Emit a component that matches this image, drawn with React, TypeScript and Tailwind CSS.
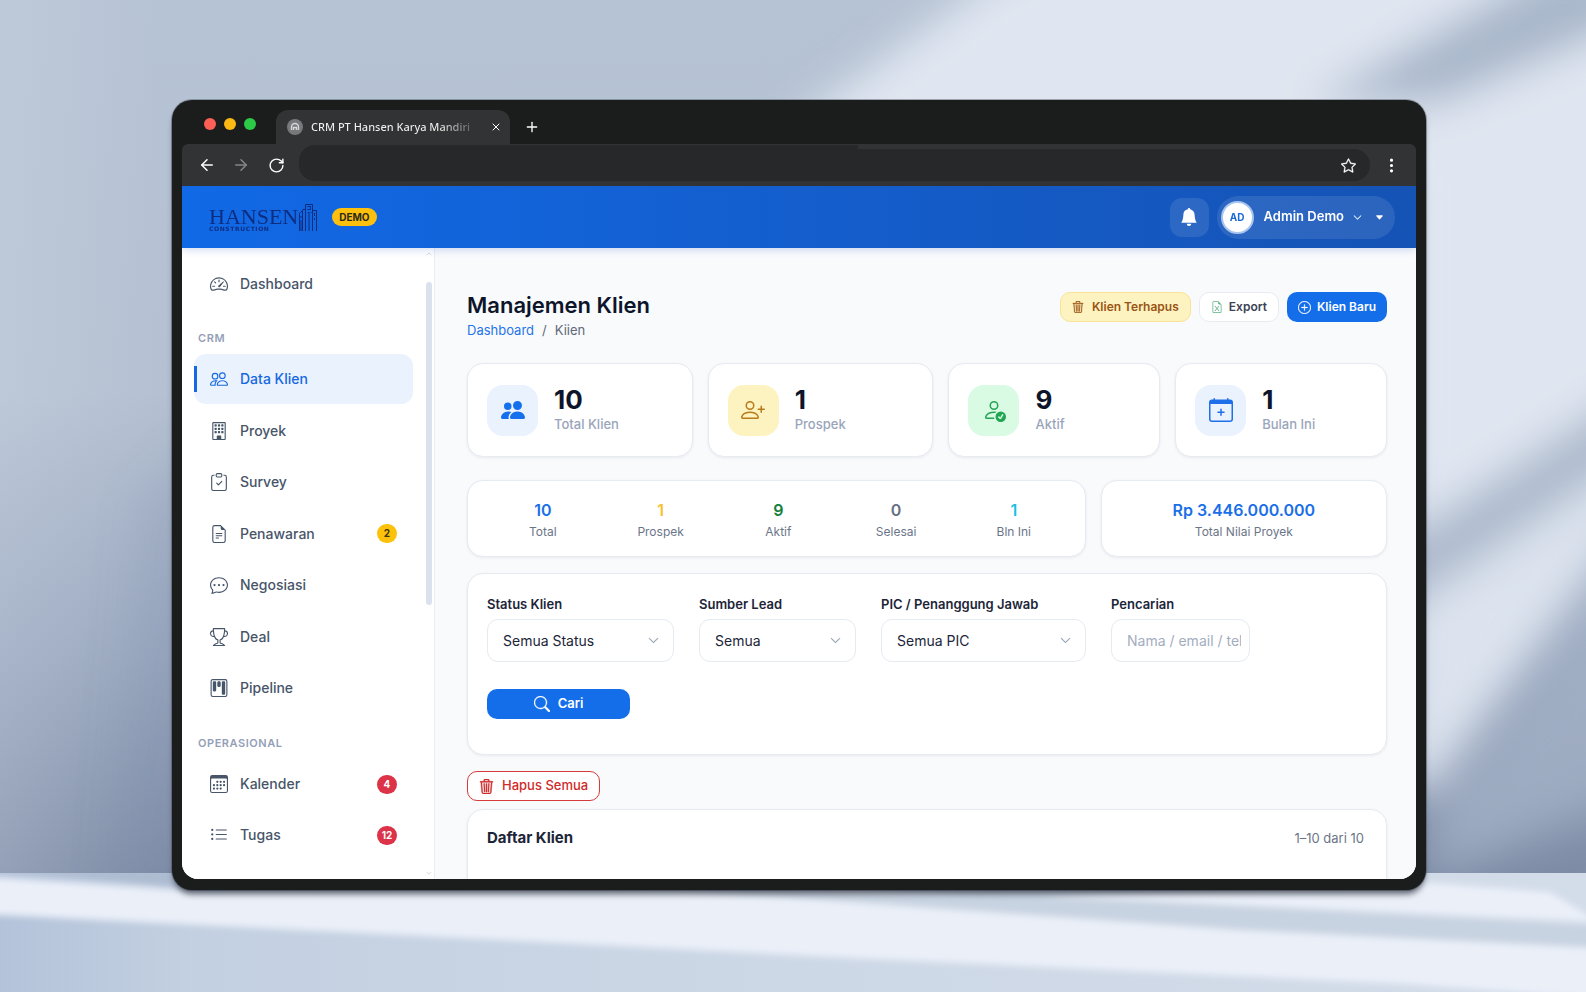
import type { ReactNode } from "react";
import type { IconType } from "react-icons";
import {
  BsBellFill,
  BsBuilding,
  BsCalendar3,
  BsCalendarPlus,
  BsCaretDownFill,
  BsChatDots,
  BsChevronDown,
  BsChevronUp,
  BsClipboardCheck,
  BsFileEarmarkExcel,
  BsFileEarmarkText,
  BsKanban,
  BsListUl,
  BsPeople,
  BsPeopleFill,
  BsPersonCheck,
  BsPersonPlus,
  BsPlusCircle,
  BsSearch,
  BsSpeedometer2,
  BsStar,
  BsThreeDotsVertical,
  BsTrash3,
  BsTrophy,
} from "react-icons/bs";
import { ArrowLeft, ArrowRight, Plus, RotateCw, X } from "lucide-react";

type NavEntry = {
  label: string;
  icon: IconType;
  active?: boolean;
  badge?: string;
  badgeClass?: string;
};

const crmMenu: NavEntry[] = [
  { label: "Data Klien", icon: BsPeople, active: true },
  { label: "Proyek", icon: BsBuilding },
  { label: "Survey", icon: BsClipboardCheck },
  {
    label: "Penawaran",
    icon: BsFileEarmarkText,
    badge: "2",
    badgeClass: "bg-[#fcc10a] text-[#3d3410]",
  },
  { label: "Negosiasi", icon: BsChatDots },
  { label: "Deal", icon: BsTrophy },
  { label: "Pipeline", icon: BsKanban },
];

const opsMenu: NavEntry[] = [
  {
    label: "Kalender",
    icon: BsCalendar3,
    badge: "4",
    badgeClass: "bg-[#dc3348] text-white",
  },
  {
    label: "Tugas",
    icon: BsListUl,
    badge: "12",
    badgeClass: "bg-[#dc3348] text-white",
  },
];

const cards = [
  {
    value: "10",
    label: "Total Klien",
    icon: BsPeopleFill,
    tile: "bg-[#eaf2fe] text-[#1570ee]",
  },
  {
    value: "1",
    label: "Prospek",
    icon: BsPersonPlus,
    tile: "bg-[#fdf3c0] text-[#b97a1c]",
  },
  {
    value: "9",
    label: "Aktif",
    icon: BsPersonCheck,
    tile: "bg-[#d9fae3] text-[#22a552]",
  },
  {
    value: "1",
    label: "Bulan Ini",
    icon: BsCalendarPlus,
    tile: "bg-[#eaf2fe] text-[#1f6fe8]",
  },
];

const summary = [
  { value: "10", label: "Total", color: "text-[#1a6fe8]" },
  { value: "1", label: "Prospek", color: "text-[#fbc02d]" },
  { value: "9", label: "Aktif", color: "text-[#15803d]" },
  { value: "0", label: "Selesai", color: "text-[#667085]" },
  { value: "1", label: "Bln Ini", color: "text-[#1cbfe0]" },
];

const filters = [
  { id: "status", label: "Status Klien", value: "Semua Status", width: "w-[187px]" },
  { id: "sumber", label: "Sumber Lead", value: "Semua", width: "w-[157px]" },
  { id: "pic", label: "PIC / Penanggung Jawab", value: "Semua PIC", width: "w-[205px]" },
];

const Backdrop = () => (
  <svg
    className="absolute inset-0 h-full w-full"
    viewBox="0 0 1586 992"
    preserveAspectRatio="none"
    aria-hidden="true"
  >
    <defs>
      <linearGradient id="wall" x1="0" y1="0" x2="0" y2="1">
        <stop offset="0" stopColor="#b6c3d4" />
        <stop offset="0.45" stopColor="#b5c1d2" />
        <stop offset="0.75" stopColor="#9aa8bf" />
        <stop offset="1" stopColor="#7e8ca6" />
      </linearGradient>
      <linearGradient id="wallLeft" x1="0" y1="0" x2="1" y2="0">
        <stop offset="0" stopColor="#d5deea" stopOpacity="0.25" />
        <stop offset="0.1" stopColor="#d5deea" stopOpacity="0" />
      </linearGradient>
      <linearGradient id="floor" x1="0" y1="0" x2="1" y2="0">
        <stop offset="0" stopColor="#b4c3da" />
        <stop offset="0.12" stopColor="#c3d0e1" />
        <stop offset="0.5" stopColor="#cdd8e6" />
        <stop offset="1" stopColor="#d3dce9" />
      </linearGradient>
      <filter id="soft" x="-20%" y="-20%" width="140%" height="140%">
        <feGaussianBlur stdDeviation="20" />
      </filter>
      <filter id="softer" x="-20%" y="-20%" width="140%" height="140%">
        <feGaussianBlur stdDeviation="3" />
      </filter>
      <clipPath id="wallClip">
        <rect width="1586" height="873" />
      </clipPath>
      <clipPath id="floorClip">
        <rect y="873" width="1586" height="119" />
      </clipPath>
    </defs>
    <g clipPath="url(#wallClip)">
      <rect width="1586" height="873" fill="url(#wall)" />
      <rect width="1586" height="873" fill="url(#wallLeft)" />
      <g filter="url(#soft)">
        <path d="M140 500 L200 440 L200 900 L110 900 Z" fill="#8393ae" opacity="0.2" />
        <path d="M1020 -40 L1660 -40 L1660 440 L1400 580 L1400 180 L760 150 Z" fill="#e0e6f1" />
        <path d="M1560 -40 L1660 -40 L1660 10 L1440 104 L1310 104 Z" fill="#a9b7cb" />
        <path d="M1660 370 L1660 440 L1400 600 L1400 540 Z" fill="#acb9cc" />
        <path d="M1660 440 L1660 480 L1430 790 L1400 790 L1400 610 Z" fill="#dce3ee" />
        <path d="M1660 540 L1660 780 L1430 880 L1440 800 Z" fill="#a3b0c6" opacity="0.8" />
      </g>
    </g>
    <g clipPath="url(#floorClip)">
      <rect y="873" width="1586" height="119" fill="url(#floor)" />
      <g filter="url(#softer)">
        <path d="M-20 876 L180 890 L850 886 L1586 938 L1620 944 L1620 1000 L1400 984 L850 958 L500 940 L-20 914 Z" fill="#eaeff8" />
        <path d="M680 890 L1060 896 L1600 926 L1600 948 L1240 930 L960 910 Z" fill="#c8d3e1" />
        <path d="M1040 896 L1420 882 L1550 892 L1600 922 Z" fill="#eaeff8" />
        <path d="M-20 868 L180 868 L180 888 Z" fill="#aebcd2" />
      </g>
    </g>
  </svg>
);

const Logo = () => (
  <a href="#" aria-label="Hansen Construction" className="flex items-end text-[#0d2d80]">
    <span className="flex flex-col">
      <span className="font-['Liberation_Serif',serif] text-[22px] leading-5">
        HANSEN
      </span>
      <span className="font-['DejaVu_Sans',sans-serif] text-[6px] leading-1 font-bold tracking-widest">
        CONSTRUCTION
      </span>
    </span>
    <svg width="20" height="28" viewBox="0 0 20 28" fill="none" stroke="currentColor" strokeWidth="1">
      <path d="M1.5 28V10.5L4.5 7.5V28M7.5 28V1.5H14.5V28M11 9v19M14.5 7.5H18.5V28" />
      <path d="M1.5 14h3M9.5 3.5h3v3h-3M9.5 9.5h1M12.5 9.5h1M3 17v11M4.5 6.5h3M16.5 10v3M16.5 15v2" />
    </svg>
  </a>
);

const BrowserChrome = () => (
  <div>
    <div className="flex h-11 items-end pl-[22px]">
      <div className="flex gap-2 pb-[14px]">
        <span className="h-3 w-3 rounded-full bg-[#fb5f56]" />
        <span className="h-3 w-3 rounded-full bg-[#fcb813]" />
        <span className="h-3 w-3 rounded-full bg-[#2bcb48]" />
      </div>
      <div className="ml-5 flex h-[34px] w-[234px] items-center rounded-t-xl bg-[#323334] pl-[11px] pr-1">
        <svg width="16" height="16" viewBox="0 0 16 16" aria-hidden="true">
          <circle cx="8" cy="8" r="8" fill="#77797c" />
          <path d="M4.5 11V8a3.5 3.5 0 0 1 7 0v3M6.5 11V8.5h3V11" stroke="#d6d7d9" strokeWidth="1.4" fill="none" />
        </svg>
        <span className="ml-2 bg-linear-to-r from-[#f1f1f1] from-80% to-[#6a6a6a] bg-clip-text font-['Noto_Sans',sans-serif] text-[11px] font-medium whitespace-nowrap text-transparent">
          CRM PT Hansen Karya Mandiri
        </span>
        <button type="button" aria-label="Tutup tab" className="ml-auto p-1 text-white">
          <X size={12} strokeWidth={2} />
        </button>
      </div>
      <button type="button" aria-label="Tab baru" className="ml-[14px] pb-[9px] text-white">
        <Plus size={16} strokeWidth={2} />
      </button>
    </div>
    <div className="flex h-[42px] items-center rounded-t-md bg-[#323334] pl-4 text-white">
      <button type="button" aria-label="Kembali">
        <ArrowLeft size={18} strokeWidth={2} />
      </button>
      <button type="button" aria-label="Maju" className="ml-4 text-[#85878a]">
        <ArrowRight size={18} strokeWidth={2} />
      </button>
      <button type="button" aria-label="Muat ulang" className="ml-[18px]">
        <RotateCw size={17} strokeWidth={2} />
      </button>
      <div className="mb-1 ml-[14px] flex h-9 flex-1 items-end">
        <div className="h-9 flex-1 rounded-l-2xl bg-[#272829]" />
        <div className="flex h-8 w-[512px] items-center justify-end rounded-r-2xl bg-[#272829] pr-[14px]">
          <button type="button" aria-label="Bookmark">
            <BsStar size={15} strokeWidth={0.3} />
          </button>
        </div>
      </div>
      <button type="button" aria-label="Menu" className="ml-[13px] mr-4">
        <BsThreeDotsVertical size={17} />
      </button>
    </div>
  </div>
);

const AppHeader = () => (
  <header className="relative z-10 flex h-[62px] items-center justify-between bg-linear-to-r from-[#1169e6] to-[#1553b5] pr-[21px] pl-[27px] shadow-[0_2px_8px_rgba(30,80,180,0.2)]">
    <div className="flex items-center gap-[14px]">
      <Logo />
      <span className="rounded-full bg-[#fcc00d] px-[7px] text-[10px] leading-[18px] font-bold text-[#2b2a1c]">
        DEMO
      </span>
    </div>
    <div className="flex items-center gap-2">
      <button
        type="button"
        aria-label="Notifikasi"
        className="grid h-[39px] w-[39px] place-items-center rounded-xl bg-white/10 text-white"
      >
        <BsBellFill size={18} />
      </button>
      <button
        type="button"
        className="flex h-[43px] items-center rounded-full bg-white/10 pr-[11px] pl-1 text-white"
      >
        <span className="grid h-[33px] w-[33px] place-items-center rounded-full border-2 border-[#a9c5ef] bg-white text-[10px] font-bold text-[#1c69d8]">
          AD
        </span>
        <span className="ml-[10px] text-[13px] font-semibold">Admin Demo</span>
        <BsChevronDown size={9} strokeWidth={0.5} className="ml-[9px]" />
        <BsCaretDownFill size={9} className="ml-[13px]" />
      </button>
    </div>
  </header>
);

const NavItem = ({ item }: { item: NavEntry }) => {
  const Icon = item.icon;
  return (
    <a
      href="#"
      className={
        item.active
          ? "relative flex h-[50px] items-center rounded-xl bg-[#eaf2fe] px-4 text-sm font-medium text-[#1668e0]"
          : "flex h-[50px] items-center px-4 text-sm font-medium text-[#475569]"
      }
    >
      {item.active && (
        <span className="absolute top-3 left-0 h-[26px] w-[3px] bg-[#1668e0]" />
      )}
      <Icon size={18} />
      <span className="ml-3">{item.label}</span>
      {item.badge && (
        <span
          className={`ml-auto min-w-5 rounded-full px-1 text-center text-[10px] leading-[19px] font-bold ${item.badgeClass}`}
        >
          {item.badge}
        </span>
      )}
    </a>
  );
};

const Sidebar = () => (
  <aside className="relative w-[253px] shrink-0 border-r border-[#e9edf4] bg-white pt-[11px] pr-[21px] pl-3">
    <nav>
      <NavItem item={{ label: "Dashboard", icon: BsSpeedometer2 }} />
      <p className="mt-[21px] mb-2 pl-1 text-[11px] leading-4 font-semibold tracking-wider text-[#94a0b8]">
        CRM
      </p>
      <div className="flex h-[359px] flex-col justify-between">
        {crmMenu.map((item) => (
          <NavItem key={item.label} item={item} />
        ))}
      </div>
      <p className="mt-[22px] mb-2 pl-1 text-[11px] leading-4 font-semibold tracking-wider text-[#94a0b8]">
        OPERASIONAL
      </p>
      <div className="flex flex-col gap-px">
        {opsMenu.map((item) => (
          <NavItem key={item.label} item={item} />
        ))}
      </div>
    </nav>
    {/* Scrollbar */}
    <div className="absolute inset-y-0 right-[2px] flex w-[6px] flex-col items-center justify-between py-[3px] text-[#b4bfd0]">
      <BsChevronUp size={6} />
      <span className="absolute top-[34px] h-[323px] w-[6px] rounded-full bg-[#dbe2ee]" />
      <BsChevronDown size={6} />
    </div>
  </aside>
);

const Card = ({ className = "", children }: { className?: string; children: ReactNode }) => (
  <div
    className={`rounded-2xl border border-[#e6eaf1] bg-white shadow-[0_1px_3px_rgba(16,24,40,0.07)] ${className}`}
  >
    {children}
  </div>
);

const Stat = ({ value, label, color }: { value: string; label: string; color: string }) => (
  <div className="pt-[2px] text-center">
    <p className={`text-base leading-6 font-semibold ${color}`}>{value}</p>
    <p className="text-xs leading-5 text-[#6b7588]">{label}</p>
  </div>
);

const Main = () => (
  <main className="min-w-0 flex-1 bg-[#f9fafc] pt-[42px] pr-[29px] pl-8">
    <div className="flex items-start justify-between">
      <div>
        <h1 className="text-[22px] leading-[30px] font-semibold text-[#0d152b]">
          Manajemen Klien
        </h1>
        <p className="flex gap-2 text-[13px] leading-5 text-[#5f6978]">
          <a href="#" className="text-[#2474ea]">
            Dashboard
          </a>
          <span>/</span>
          <span>Kiien</span>
        </p>
      </div>
      <div className="mt-[2px] flex gap-2 text-xs font-semibold">
        <button
          type="button"
          className="flex h-[30px] items-center gap-2 rounded-[10px] border border-[#f8e396] bg-[#fdf3c0] px-[11px] text-[#9a5314]"
        >
          <BsTrash3 size={12} strokeWidth={0.3} /> Klien Terhapus
        </button>
        <button
          type="button"
          className="flex h-[30px] items-center gap-[6px] rounded-[10px] border border-[#e8ebf2] bg-white px-[11px] text-[#3b4254]"
        >
          <BsFileEarmarkExcel size={12} className="text-[#5bb183]" /> Export
        </button>
        <button
          type="button"
          className="flex h-[30px] items-center gap-[6px] rounded-[10px] bg-[#146eea] px-[11px] text-white"
        >
          <BsPlusCircle size={13} strokeWidth={0.3} /> Klien Baru
        </button>
      </div>
    </div>

    <div className="mt-[23px] grid grid-cols-[226fr_226fr_212fr_212fr] gap-[15px]">
      {cards.map(({ value, label, icon: Icon, tile }) => (
        <Card key={label} className="flex h-[94px] items-center gap-4 px-[19px]">
          <div className={`grid h-[51px] w-[51px] place-items-center rounded-2xl ${tile}`}>
            <Icon size={24} />
          </div>
          <div>
            <p className="text-[26px] leading-7 font-bold text-[#0d152b]">{value}</p>
            <p className="text-[13px] leading-5 font-medium text-[#9aa5bb]">{label}</p>
          </div>
        </Card>
      ))}
    </div>

    <div className="mt-[23px] grid grid-cols-[618fr_286fr] gap-[15px]">
      <Card className="grid h-[77px] grid-cols-5 items-center pr-3 pl-4">
        {summary.map((item) => (
          <Stat key={item.label} {...item} />
        ))}
      </Card>
      <Card className="grid h-[77px] items-center">
        <Stat value="Rp 3.446.000.000" label="Total Nilai Proyek" color="text-[#1a6fe8]" />
      </Card>
    </div>

    <Card className="mt-4 h-[182px] px-[19px] pt-5">
      <form>
        <div className="flex gap-[25px]">
          {filters.map(({ id, label, value, width }) => (
            <div key={id} className={width}>
              <label
                htmlFor={id}
                className="block text-[13px] leading-5 font-semibold text-[#1c2538]"
              >
                {label}
              </label>
              <div className="relative mt-[5px]">
                <select
                  id={id}
                  className="h-[43px] w-full appearance-none rounded-[11px] border border-[#e6eaf1] bg-white pl-[15px] text-sm text-[#1c2538]"
                >
                  <option>{value}</option>
                </select>
                <BsChevronDown
                  size={11}
                  strokeWidth={0.5}
                  className="pointer-events-none absolute top-4 right-[15px] text-[#8b98ad]"
                />
              </div>
            </div>
          ))}
          <div className="w-[139px]">
            <label
              htmlFor="cari"
              className="block text-[13px] leading-5 font-semibold text-[#1c2538]"
            >
              Pencarian
            </label>
            <input
              id="cari"
              type="text"
              placeholder="Nama / email / telepon"
              className="mt-[5px] h-[43px] w-full rounded-[11px] border border-[#e6eaf1] bg-white pr-2 pl-[15px] text-sm placeholder:text-[#a3adc0]"
            />
          </div>
        </div>
        <button
          type="submit"
          className="mt-[27px] flex h-[30px] w-[143px] items-center justify-center gap-2 rounded-[10px] bg-[#146eea] text-[13px] font-semibold text-white"
        >
          <BsSearch size={16} strokeWidth={0.3} /> Cari
        </button>
      </form>
    </Card>

    <button
      type="button"
      className="mt-4 flex h-[30px] items-center gap-2 rounded-[10px] border border-[#d63a3a] bg-white px-[11px] text-[13px] font-medium text-[#cf2a2a]"
    >
      <BsTrash3 size={15} strokeWidth={0.5} /> Hapus Semua
    </button>

    <Card className="mt-2 flex h-[180px] items-start justify-between pt-[18px] pr-[22px] pl-[19px]">
      <h2 className="text-[15px] leading-5 font-bold text-[#1c2538]">Daftar Klien</h2>
      <span className="text-[13px] leading-5 text-[#6b7588]">1–10 dari 10</span>
    </Card>
  </main>
);

const App = () => {
  return (
    <div className="relative flex h-screen flex-col overflow-hidden pt-[100px] pr-[160px] pb-[102px] pl-[172px] font-['Inter',sans-serif]">
      <Backdrop />
      <div className="relative flex min-h-0 flex-1 flex-col rounded-[20px] bg-[#1b1c1c] px-[10px] pb-[11px] shadow-[0_6px_6px_-2px_rgba(30,35,50,0.7),0_0_0_1px_rgba(90,95,105,0.5)]">
        <BrowserChrome />
        <div className="flex min-h-0 flex-1 flex-col overflow-hidden rounded-b-2xl bg-white">
          <AppHeader />
          <div className="flex min-h-0 flex-1 overflow-hidden">
            <Sidebar />
            <Main />
          </div>
        </div>
      </div>
    </div>
  );
};

export default App;
